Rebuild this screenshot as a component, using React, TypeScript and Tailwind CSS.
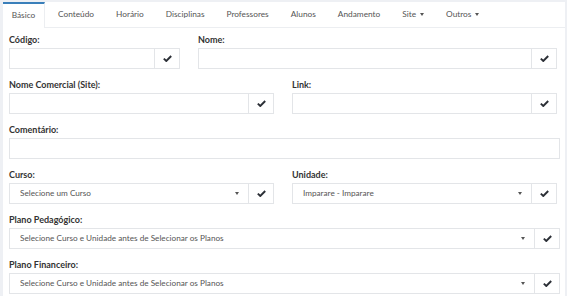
import React from "react";

const Check = () => (
  <svg width="9" height="7" viewBox="0 0 9 7" className="block">
    <path d="M0.8 3.6 L3.3 6 L8.2 1" fill="none" stroke="#2b2f36" strokeWidth="1.9" strokeLinejoin="miter" />
  </svg>
);

const Arrow = () => (
  <svg width="4" height="3" viewBox="0 0 4 3" className="block">
    <path d="M0 0 L4 0 L2 3 Z" fill="#555" />
  </svg>
);

const Label = ({ children }: { children: React.ReactNode }) => (
  <div className="text-[9px] leading-[12px] font-bold text-[#333] mb-[2px] h-[12px] whitespace-nowrap">{children}</div>
);

const Input = ({ btn }: { btn?: boolean }) => (
  <div className="flex h-[21px] border border-[#e3e5e8] bg-white">
    <div className="flex-1" />
    {btn && (
      <div className="w-[25px] border-l border-[#e3e5e8] flex items-center justify-center">
        <Check />
      </div>
    )}
  </div>
);

const Select = ({ text }: { text: string }) => (
  <div className="flex h-[21px] border border-[#e3e5e8] bg-white">
    <div className="flex-1 flex items-center pl-[10px] pr-[9px] text-[8.2px] text-[#555]">
      <span className="flex-1 truncate">{text}</span>
      <Arrow />
    </div>
    <div className="w-[25px] border-l border-[#e3e5e8] flex items-center justify-center">
      <Check />
    </div>
  </div>
);

const tabs = ["Conteúdo", "Horário", "Disciplinas", "Professores", "Alunos", "Andamento"];

export default function App() {
  return (
    <div className="w-[567px] h-[296px] bg-[#eef0f4] pt-[2px] pl-[3px] pr-[2px] overflow-hidden" style={{ fontFamily: "Lato, 'Open Sans', sans-serif" }}>
      <div className="bg-white h-full">
        <div className="flex h-[26px] border-b border-[#eceef1] text-[8.3px] text-[#555]">
          <div className="w-[42px] -mb-px bg-white border-t-2 border-[#3a7fba] border-r border-r-[#eceef1] flex items-center justify-center pb-[1px]">Básico</div>
          <div className="flex items-center pl-[13px] gap-[22px] pb-[1px]">
            {tabs.map((t) => (
              <span key={t}>{t}</span>
            ))}
            <span className="flex items-center gap-[4px]">Site <Arrow /></span>
            <span className="flex items-center gap-[4px]">Outros <Arrow /></span>
          </div>
        </div>
        <div className="pl-[6px] pr-[5px] pt-[6px]">
          <div className="grid grid-cols-[171px_359px] gap-x-[18px]">
            <div className="mb-[10px]"><Label>Código:</Label><Input btn /></div>
            <div className="mb-[10px]"><Label>Nome:</Label><Input btn /></div>
          </div>
          <div className="grid grid-cols-[265px_265px] gap-x-[18px]">
            <div className="mb-[10px]"><Label>Nome Comercial (Site):</Label><Input btn /></div>
            <div className="mb-[10px]"><Label>Link:</Label><Input btn /></div>
          </div>
          <div className="mb-[10px]"><Label>Comentário:</Label><Input /></div>
          <div className="grid grid-cols-[265px_265px] gap-x-[18px]">
            <div className="mb-[10px]"><Label>Curso:</Label><Select text="Selecione um Curso" /></div>
            <div className="mb-[10px]"><Label>Unidade:</Label><Select text="Imparare - Imparare" /></div>
          </div>
          <div className="mb-[10px]"><Label>Plano Pedagógico:</Label><Select text="Selecione Curso e Unidade antes de Selecionar os Planos" /></div>
          <div className="mb-[9px]"><Label>Plano Financeiro:</Label><Select text="Selecione Curso e Unidade antes de Selecionar os Planos" /></div>
        </div>
      </div>
    </div>
  );
}
